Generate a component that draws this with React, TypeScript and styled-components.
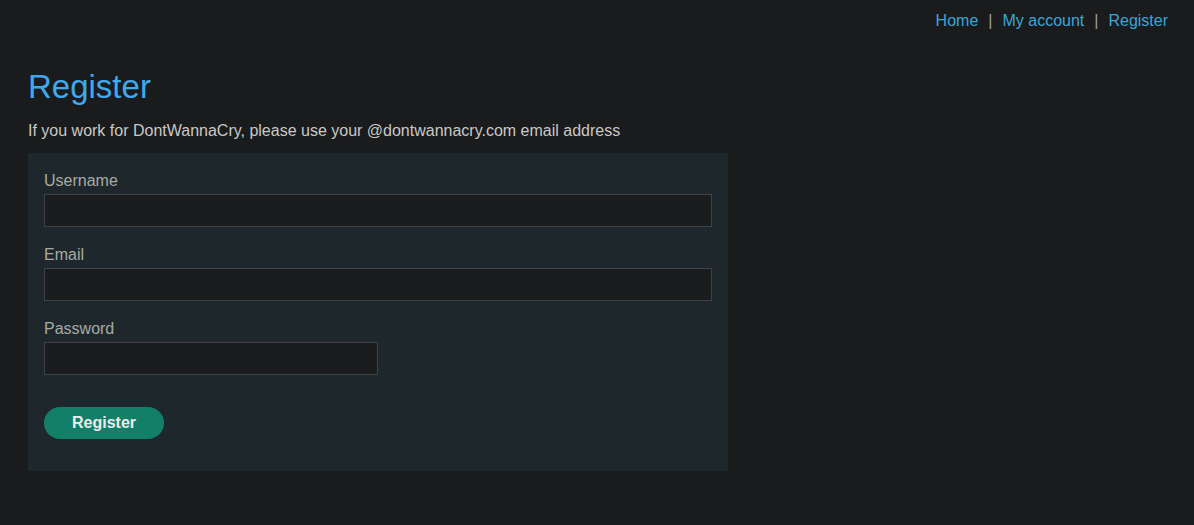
import styled, { createGlobalStyle } from "styled-components";

const GlobalStyle = createGlobalStyle`
  html, body {
    margin: 0;
    background: #1a1b1c;
    font-family: "Liberation Sans", Arial, sans-serif;
  }
`;

const Page = styled.div`
  min-height: 525px;
  padding: 0 28px;
`;

const Nav = styled.nav`
  display: flex;
  justify-content: flex-end;
  align-items: center;
  gap: 10px;
  padding: 12px 0 0;
  margin-right: -2px;
  font-size: 16px;
  line-height: 18px;
`;

const NavLink = styled.a`
  color: #3aa6d8;
  text-decoration: none;
`;

const Divider = styled.span`
  color: #a0a0a0;
`;

const Title = styled.h1`
  margin: 38px 0 0;
  font-size: 33px;
  line-height: 38px;
  font-weight: normal;
  color: #3fa9ef;
`;

const Intro = styled.p`
  margin: 16px 0 0;
  font-size: 16px;
  line-height: 18px;
  color: #c9c9c6;
`;

const Panel = styled.form`
  width: 700px;
  box-sizing: border-box;
  margin-top: 13px;
  padding: 19px 16px 32px;
  background: #1e282c;
`;

const Field = styled.div<{ $last?: boolean }>`
  margin-bottom: ${(p) => (p.$last ? "0" : "19px")};
`;

const Label = styled.label`
  display: block;
  margin-bottom: 4px;
  font-size: 16px;
  line-height: 18px;
  color: #a9aaa3;
`;

const Input = styled.input<{ $half?: boolean }>`
  display: block;
  box-sizing: border-box;
  width: ${(p) => (p.$half ? "50%" : "100%")};
  height: 33px;
  margin: 0;
  border: 1px solid #3e4446;
  background: #1b1c1d;
  color: #ddd;
  font: inherit;
  padding: 0 8px;
  outline: none;
`;

const Button = styled.button`
  display: block;
  width: 120px;
  height: 32px;
  margin-top: 32px;
  border: none;
  border-radius: 16px;
  background: #128068;
  color: #ececec;
  font-family: "Liberation Sans", Arial, sans-serif;
  font-size: 16px;
  font-weight: bold;
  cursor: pointer;
`;

export default function App() {
  return (
    <Page>
      <GlobalStyle />
      <Nav>
        <NavLink href="#">Home</NavLink>
        <Divider>|</Divider>
        <NavLink href="#">My account</NavLink>
        <Divider>|</Divider>
        <NavLink href="#">Register</NavLink>
      </Nav>
      <Title>Register</Title>
      <Intro>If you work for DontWannaCry, please use your @dontwannacry.com email address</Intro>
      <Panel onSubmit={(e) => e.preventDefault()}>
        <Field>
          <Label>Username</Label>
          <Input type="text" />
        </Field>
        <Field>
          <Label>Email</Label>
          <Input type="email" />
        </Field>
        <Field $last>
          <Label>Password</Label>
          <Input type="password" $half />
        </Field>
        <Button type="submit">Register</Button>
      </Panel>
    </Page>
  );
}
